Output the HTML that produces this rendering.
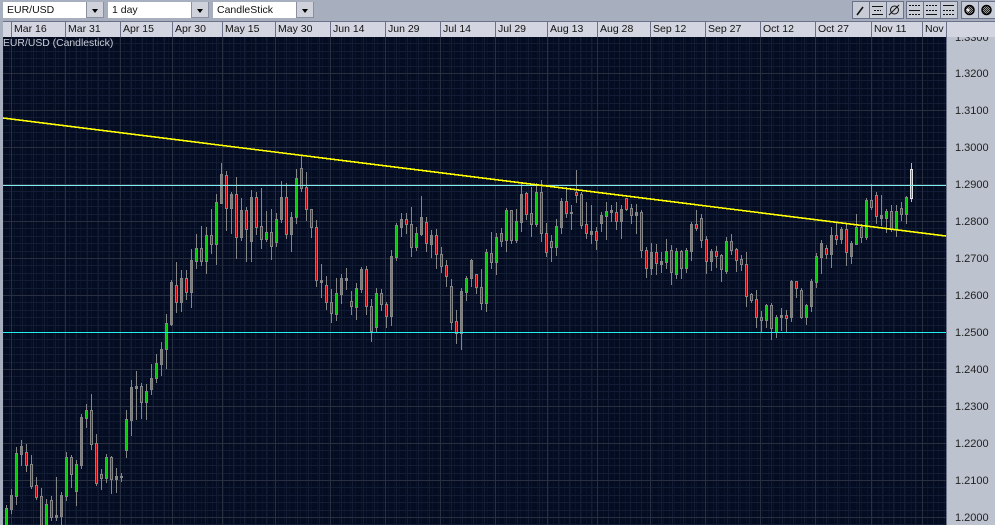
<!DOCTYPE html>
<html><head><meta charset="utf-8"><style>
html,body{margin:0;padding:0;background:#a7aebd}
#r{position:relative;width:995px;height:525px;overflow:hidden;background:#a7aebd;font-family:"Liberation Sans",sans-serif;font-size:10.5px;color:#111}
.a{position:absolute;white-space:nowrap}
.sel{position:absolute;top:2px;height:16px;background:#fff;line-height:16px;padding-left:4px;box-sizing:border-box;border-right:1px solid #8a90a0}
.btn{position:absolute;top:2px;width:17px;height:16px;background:#cfd2db;border-bottom:1px solid #8a90a0;border-right:1px solid #8a90a0;box-sizing:border-box}
.btn:after{content:"";position:absolute;left:5px;top:7px;border-left:3.5px solid transparent;border-right:3.5px solid transparent;border-top:4px solid #000}
#h{position:absolute;left:3px;top:21px;width:992px;height:16px;background:#d3d6e0;border-top:1px solid #6a7188;box-sizing:border-box}
#h span{position:absolute;top:0;height:15px;line-height:15px;border-left:1px solid #6a7188;padding-left:2px}
#ax{position:absolute;left:946px;top:37px;width:49px;height:488px;background:#bcc2ce;border-left:1px solid #6a7188;box-sizing:border-box;overflow:hidden}
#ax span{position:absolute;left:8px;font-size:11px;line-height:14px;color:#222}
svg{position:absolute}
</style></head><body><div id="r">
<div class="sel" style="left:3px;width:84px">EUR/USD</div><div class="btn" style="left:87px"></div>
<div class="sel" style="left:108px;width:84px">1 day</div><div class="btn" style="left:192px"></div>
<div class="sel" style="left:213px;width:84px">CandleStick</div><div class="btn" style="left:297px"></div>
<svg style="left:850px;top:0" width="145" height="21" viewBox="850 0 145 21" fill="none">
<defs><pattern id="ht" width="2" height="2" patternUnits="userSpaceOnUse"><rect width="2" height="2" fill="#999"/><rect width="1" height="1" fill="#222"/><rect x="1" y="1" width="1" height="1" fill="#222"/></pattern></defs>
<g stroke="#6a7188" fill="#c8ccd6"><rect x="852.5" y="1.5" width="17" height="17"/><rect x="869.5" y="1.5" width="17" height="17"/><rect x="886.5" y="1.5" width="17" height="17"/><rect x="906.5" y="1.5" width="17" height="17"/><rect x="923.5" y="1.5" width="17" height="17"/><rect x="940.5" y="1.5" width="17" height="17"/><rect x="961.5" y="1.5" width="17" height="17"/><rect x="978.5" y="1.5" width="17" height="17"/></g>
<g stroke="#111"><path d="M857 15L863 7" stroke-width="1.6"/><path d="M872 6.5h11M872 14.5h11"/><path d="M874 10.5h7" stroke-dasharray="2 1"/><path d="M889 15L899 5"/><circle cx="894.5" cy="10" r="4"/>
<path d="M909 5.5h11M909 14.5h11" stroke-dasharray="2 1"/><path d="M909 10.5h11"/><path d="M926 5.5h11M926 10.5h11" stroke-dasharray="2 1"/><path d="M926 14.5h11"/><path d="M943 5.5h11"/><path d="M943 10.5h11M943 14.5h11" stroke-dasharray="2 1"/></g>
<circle cx="969.5" cy="10" r="4.5" fill="url(#ht)" stroke="#000" stroke-width="1.5"/><circle cx="968" cy="10" r="1.5" fill="#eee"/>
<circle cx="986.5" cy="10" r="4.5" fill="url(#ht)" stroke="#000" stroke-width="1.5"/>
</svg>
<div id="h">
<span style="left:8px">Mar 16</span><span style="left:62px">Mar 31</span><span style="left:117px">Apr 15</span><span style="left:169px">Apr 30</span><span style="left:219px">May 15</span><span style="left:272px">May 30</span><span style="left:327px">Jun 14</span><span style="left:382px">Jun 29</span><span style="left:437px">Jul 14</span><span style="left:492px">Jul 29</span><span style="left:544px">Aug 13</span><span style="left:594px">Aug 28</span><span style="left:647px">Sep 12</span><span style="left:702px">Sep 27</span><span style="left:757px">Oct 12</span><span style="left:812px">Oct 27</span><span style="left:868px">Nov 11</span><span style="left:919px;width:21px;border-right:1px solid #6a7188">Nov</span>
</div>
<svg id="c" style="left:3px;top:37px" width="943" height="488" viewBox="3 37 943 488" shape-rendering="crispEdges"></svg>
<div class="a" style="left:3px;top:37px;line-height:14px;color:#c9cdd6;font-size:10.4px">EUR/USD (Candlestick)</div>
<div id="ax">
<span style="top:-6px">1.3300</span><span style="top:30px">1.3200</span><span style="top:67px">1.3100</span><span style="top:104px">1.3000</span><span style="top:141px">1.2900</span><span style="top:178px">1.2800</span><span style="top:215px">1.2700</span><span style="top:252px">1.2600</span><span style="top:289px">1.2500</span><span style="top:326px">1.2400</span><span style="top:363px">1.2300</span><span style="top:400px">1.2200</span><span style="top:437px">1.2100</span><span style="top:474px">1.2000</span>
</div>
<script>
var D=[[340,6,"G495,505,600,600 G447,466,506,518 G320,340,467,492 G300,319,341,375 R312,337,374,392 R345,373,437,445 R411,436,470,477 R445,469,600,600 G477,493,600,600 R467,481,530,540 D411,525,530,540 G457,465,527,600 G336,352,467,480 R346,352,401,440 G360,373,452,494 G222,232,374,385 G192,211,233,261 R162,211,311,326 R282,310,428,435 R387,403,413,447 G342,352,413,425 R347,352,416,458 D384,409,416,456 D398,408,410,422 G210,238,329,350 G120,142,239,284 D93,139,143,237 R129,139,187,234 G132,154,187,236 G72,115,148,162 G42,70,115,125 G6,28,71,104"],
[150,166,"G492,520,597,654 G390,397,522,525 R336,406,455,486 G360,385,455,483 R360,385,425,446 G296,331,425,470 G252,295,332,353 R228,295,332,345 G231,256,332,368 R177,256,281,309 G132,157,281,341 G39,73,158,158 R63,76,173,240 G127,132,173,250 R81,133,260,323 G143,181,260,270 R171,181,238,332 G120,142,272,332 R126,142,230,252 R114,229,266,293 G183,247,266,272 R178,247,287,326 G190,208,277,288 G94,142,208,215 R99,142,253,264 G187,202,253,302 G57,85,202,218 R15,55,113,122 R67,112,178,209 R178,178,232,260 R210,232,391,407 D342,391,395,440"],
[170,326,"R318,346,397,416 R357,397,430,456 G324,370,431,450 G312,325,371,398 D294,325,329,357 R363,394,409,431 G339,355,410,447 G292,298,356,365 R288,298,409,431 R387,409,482,512 G354,370,470,483 R358,370,403,420 R396,403,439,470 G240,259,439,465 G158,166,260,270 G130,148,170,197 R129,148,163,188 R111,163,230,258 G171,190,230,240 G78,142,191,195 R141,157,220,243 G180,196,221,261 R177,196,253,294 R232,253,287,305 R270,286,319,347 R327,349,455,477 R420,454,490,519 G355,364,490,536 G318,325,365,390 G267,270,325,348 R311,313,352,370 R297,352,398,416 G237,247,398,422"],
[160,491,"R217,278,307,323 G219,232,307,341 R205,220,242,258 G143,151,241,272 R150,151,239,248 G148,184,240,245 G65,103,185,212 R95,100,161,177 R80,160,191,227 G70,97,191,198 R60,97,218,242 R190,218,275,288 R225,244,260,302 G178,199,260,286 G113,124,200,218 R80,124,158,170 D136,156,158,206 R30,97,104,125 R97,103,194,203 R127,193,220,234 D135,214,221,248 R202,214,239,266 G156,166,188,212 G127,152,167,238 D136,151,157,183 R127,157,182,208 G136,146,182,233 R113,115,146,149 R132,145,164,188 D133,157,164,218 R150,157,271,290"],
[200,646,"R141,150,205,230 G129,157,205,221 R132,157,190,222 D156,184,191,215 G118,152,185,204 R135,151,215,251 G143,154,223,233 R151,154,203,233 G145,151,203,216 G66,73,152,179 R30,73,83,90 R42,55,119,140 R109,118,182,218 G146,154,182,210 R139,154,167,200 R161,166,206,242 G112,122,212,218 R102,122,149,161 R145,148,179,212 R166,178,193,211 R157,193,288,317 R278,283,299,305 R270,298,352,380 R333,352,361,395 G312,316,361,380 R309,316,383,416 G345,352,395,411 D324,346,352,390 R331,346,353,397 G240,243,352,362 R243,244,265,290 R265,271,351,355"],
[150,806,"G461,465,500,521 G388,393,467,482 G310,319,396,410 G271,280,320,368 R286,295,311,325 G232,256,311,350 R217,256,266,283 G232,237,266,280 R219,238,307,344 G273,280,317,340 G192,232,281,283 R222,232,260,275 G145,151,260,266 R102,151,171,176 R126,136,197,218 D135,196,203,225 G178,184,203,246 R166,184,238,243 G165,184,238,258 R156,175,193,210 G137,142,193,219 W39,58,145,152"]];
var T=[11,65,120,172,222,275,330,385,440,495,547,597,650,705,760,815,871,922,946];
var g="",i,j,x,y;
function R(a,b,w,h,f){return h>0?'<rect x="'+a+'" y="'+b+'" width="'+w+'" height="'+h+'" fill="'+f+'"/>':''}
g+=R(3,37,943,488,"#040c22");
for(i=3;i<946;i+=5.5)g+=R(Math.round(i),37,1,488,"#0a1329");
for(i=0;i<14;i++)for(j=1;j<5;j++){y=Math.round(36+37*i+j*7.4);g+=R(3,y,943,1,"#121c34")}
for(i=1;i<T.length;i++){for(x=T[i-1]+11;x<T[i]-3;x+=11)g+=R(x,37,1,488,"#121c34")}
for(i=0;i<14;i++)g+=R(3,36+37*i,943,1,"#28303f");
for(i=0;i<T.length-1;i++)g+=R(T[i],37,1,488,"#28303f");
D.forEach(function(d){var o=d[0],cx=d[1];d[2].split(" ").forEach(function(s,n){
var t=s[0],v=s.slice(1).split(",").map(function(q){return Math.round(o+q/3)}),c=cx+5*n;
var W=t=="W",b=W?"#e2e4e6":"#858585",f=t=="R"?"#c80000":(t=="D"?"#858585":"#00cc00");
g+=R(c,v[0],1,v[3]-v[0]+1,W?"#b8b8b8":"#858585");
g+=R(c-1,v[1],3,v[2]-v[1]+1,b);
g+=R(c,v[1]+1,1,v[2]-v[1]-1,f);
})});
document.getElementById("c").innerHTML=g+R(3,185,943,1,"#7eeef2")+R(3,332,943,1,"#20f0f0")+'<path d="M3 118L946 236" stroke="#ffff00" stroke-width="1.6" fill="none"/>';
</script>
</div></body></html>
